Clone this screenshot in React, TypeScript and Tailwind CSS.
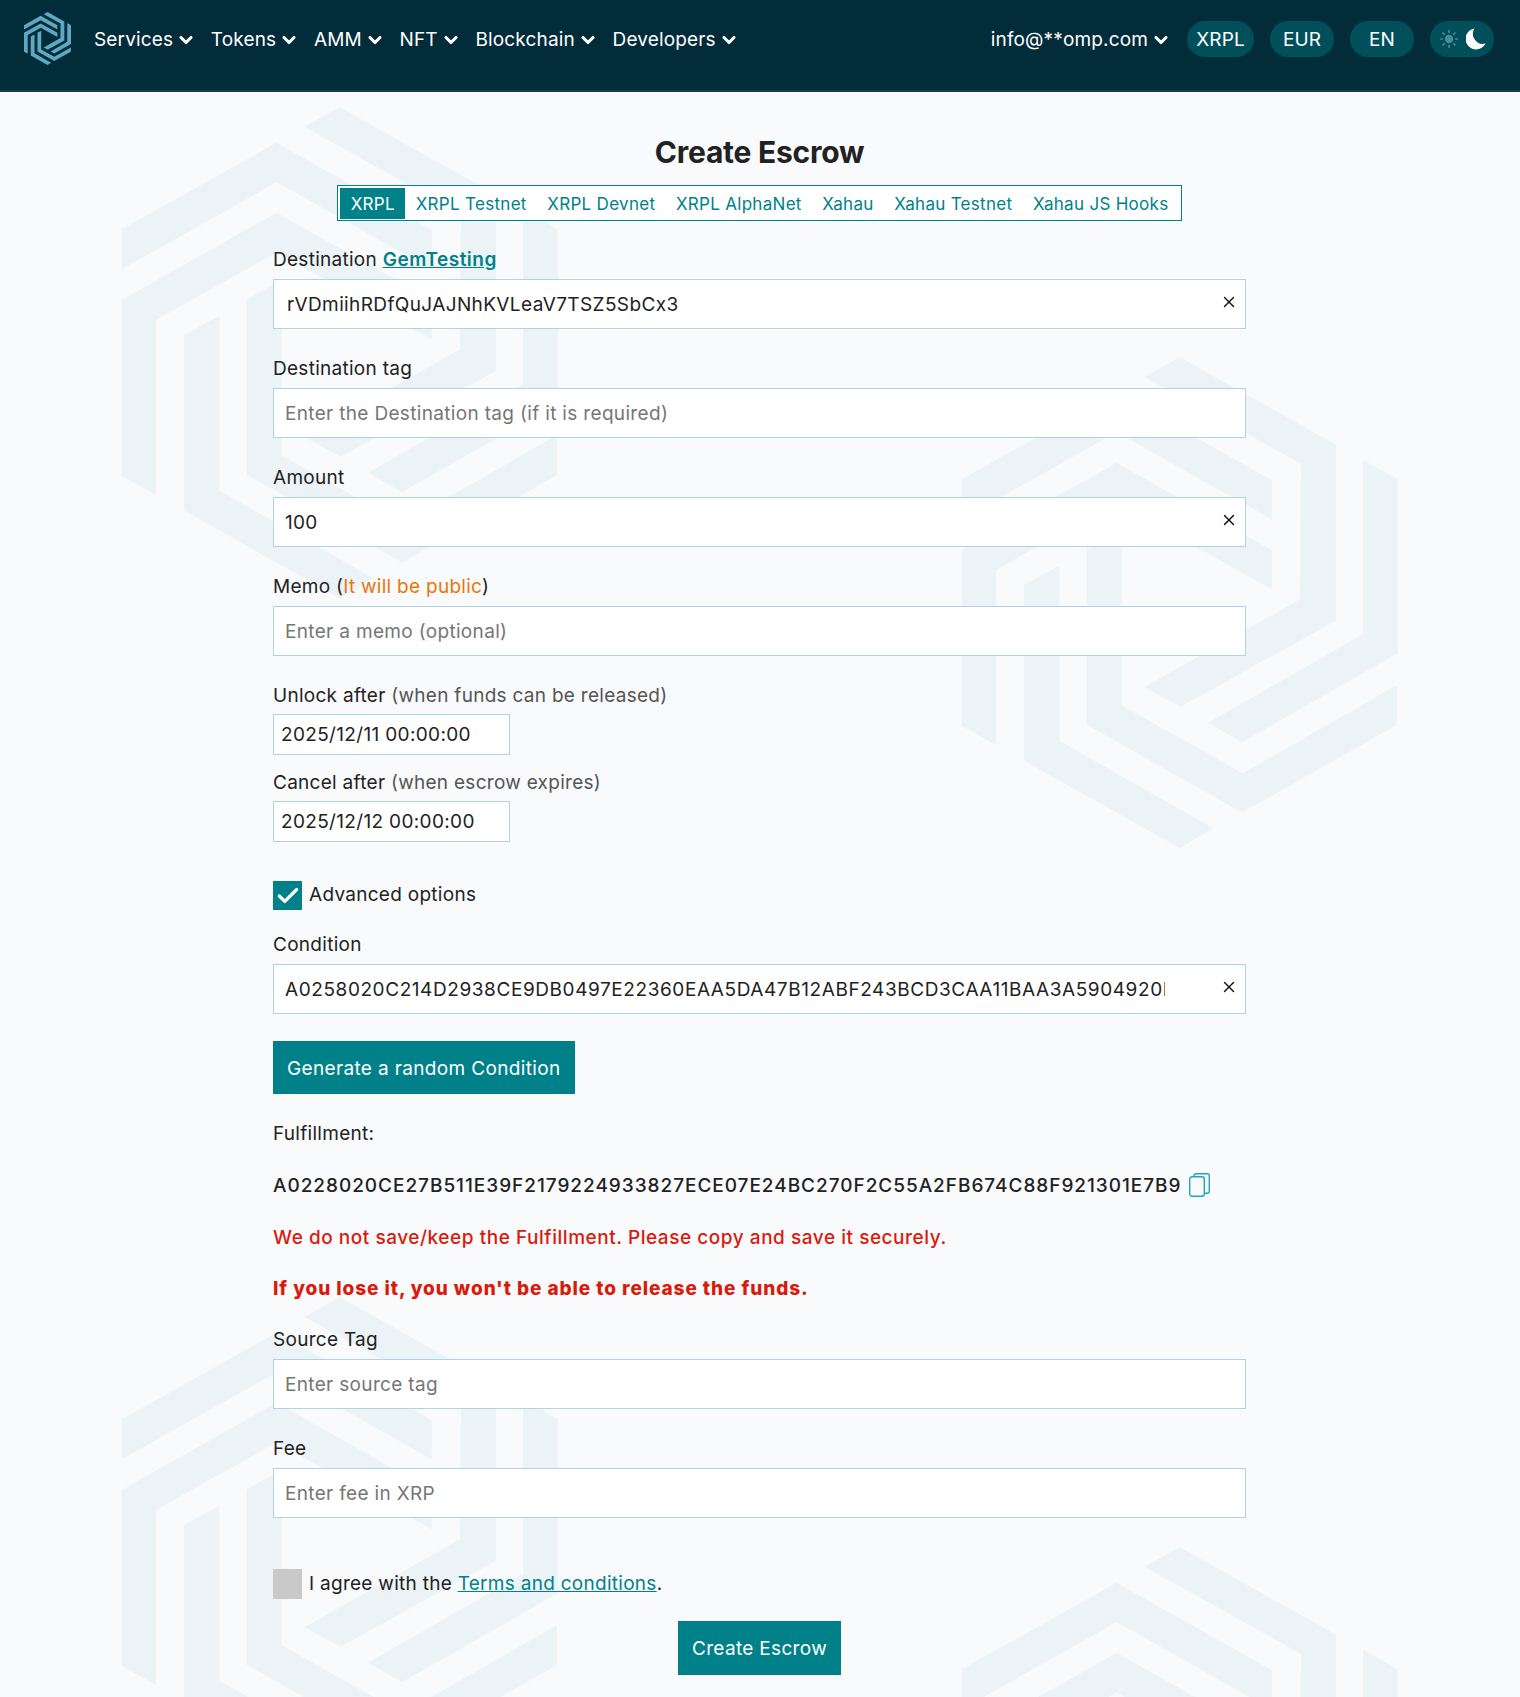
import React from "react";
import { ChevronDown, Check, Sun, X } from "lucide-react";

const navItems = ["Services", "Tokens", "AMM", "NFT", "Blockchain", "Developers"];
const networks = ["XRPL", "XRPL Testnet", "XRPL Devnet", "XRPL AlphaNet", "Xahau", "Xahau Testnet", "Xahau JS Hooks"];

// logo strands, traced from the background mark
const strands = [
  "613,110 720,52 1188,314 1188,842 722,1100 613,1042 1080,778 1083,372",
  "1270,360 1374,418 1374,940 906,1207 804,1148 1270,882",
  "440,628 545,570 545,1096 908,1300 1370,1036 1370,1156 906,1418 440,1154",
  "358,677 252,735 252,1262 720,1525 820,1465 358,1202",
  "65,418 530,158 995,420 995,538 530,277 65,538",
  "65,630 530,368 995,630 995,748 530,487 168,690 168,1215 65,1157",
];

const Mark = ({ x, y }: { x: number; y: number }) => (
  <g transform={`translate(${x} ${y}) scale(0.3333)`}>
    {strands.map((points) => (
      <polygon key={points} points={points} />
    ))}
  </g>
);

const Logo = () => (
  <svg viewBox="65 52 1309 1473" className="h-[53px] w-[47px] shrink-0 -translate-y-[1px] fill-[#5fa8c1]">
    {strands.map((points) => (
      <polygon key={points} points={points} />
    ))}
  </svg>
);

const CopyIcon = () => (
  <svg viewBox="0 0 21 24" fill="none" stroke="#1fa6bf" strokeWidth="1.4" className="ml-[8px] h-[24px] w-[21px] -translate-y-[1px]">
    <rect x="0.7" y="3.7" width="14.6" height="19.6" rx="2.5" />
    <path d="M5 3.5V2.7A2 2 0 0 1 7 .7h11.3a2 2 0 0 1 2 2v15.6a2 2 0 0 1-2 2h-3" />
  </svg>
);

const MoonIcon = () => (
  <svg viewBox="0 0 20 22" className="h-[22px] w-[20px] fill-white">
    <path d="M8.5 .5A10.5 10.5 0 1 0 19.5 15.5A10 10 0 0 1 8.5 .5Z" />
  </svg>
);

const TextInput = ({
  value,
  placeholder,
  clear,
  className = "pl-[11px] tracking-[0.33px]",
}: {
  value?: string;
  placeholder?: string;
  clear?: boolean;
  className?: string;
}) => (
  <div className="relative">
    <input
      readOnly
      value={value ?? ""}
      placeholder={placeholder}
      className={`block h-[50px] w-full border border-[#add5e0] bg-white text-[19px] text-[#222] outline-none placeholder:text-[#767676] ${className}`}
    />
    {clear && <X size={18} strokeWidth={1.9} className="absolute right-[8px] top-[14px] text-[#111]" />}
  </div>
);

const Label = ({ children, gap = "mb-[6px]" }: { children: React.ReactNode; gap?: string }) => (
  <div className={`${gap} h-[27px] text-[19px] leading-[27px] tracking-[0.28px] text-[#222]`}>{children}</div>
);

const DateInput = ({ value }: { value: string }) => (
  <input
    readOnly
    value={value}
    className="block h-[41px] w-[237px] border border-[#add5e0] bg-white pl-[7px] text-[19px] tracking-[0.34px] text-[#222] outline-none"
  />
);

export default function App() {
  return (
    <div className="relative min-h-[1697px] overflow-hidden bg-[#f9fafc] font-['Inter',sans-serif] text-[19px] tracking-[0.28px] text-[#222]">
      <svg className="absolute inset-0 h-full w-full fill-[#ecf3f6]">
        <Mark x={100} y={90} />
        <Mark x={940} y={340} />
        <Mark x={100} y={1280} />
        <Mark x={940} y={1530} />
      </svg>

      <header className="relative flex h-[92px] items-center justify-between border-b-2 border-[#123f4e] bg-[#022c3a] pb-[12px] pl-[24px] pr-[26px] text-white">
        <div className="flex items-center">
          <Logo />
          <nav className="ml-[23px] flex translate-y-[1px] gap-[14.7px] tracking-[0.15px]">
            {navItems.map((item) => (
              <div key={item} className="flex items-center gap-[3px]">
                {item}
                <ChevronDown size={20} strokeWidth={3.8} />
              </div>
            ))}
          </nav>
        </div>
        <div className="flex items-center gap-[16px] tracking-[0.15px]">
          <div className="flex translate-y-[1px] items-center gap-[3px]">
            info@**omp.com
            <ChevronDown size={20} strokeWidth={3.8} />
          </div>
          <div className="flex h-[36px] w-[67px] items-center justify-center rounded-full bg-[#024f5c] pt-[2px]">XRPL</div>
          <div className="flex h-[36px] w-[64px] items-center justify-center rounded-full bg-[#024f5c] pt-[2px]">EUR</div>
          <div className="flex h-[36px] w-[64px] items-center justify-center rounded-full bg-[#024f5c] pt-[2px]">EN</div>
          <div className="flex h-[36px] w-[64px] items-center justify-center gap-[7px] rounded-full bg-[#024f5c]">
            <Sun size={20} fill="currentColor" className="text-[#4d8a94]" />
            <MoonIcon />
          </div>
        </div>
      </header>

      <main className="relative ml-[273px] w-[973px]">
        <h1 className="mt-[41px] h-[38px] text-center text-[30px] font-bold leading-[38px] tracking-[-0.25px] text-[#222]">
          Create Escrow
        </h1>
        <div className="mt-[14px] flex justify-center">
          <div className="flex h-[36px] items-center border border-[#00818a] bg-white p-[2px] text-[17px] tracking-[0.3px] text-[#00818a]">
            <span className="flex h-[31px] items-center bg-[#00818a] px-[10.5px] pt-[4px] text-white">XRPL</span>
            {networks.slice(1).map((name) => (
              <span key={name} className="px-[10.3px] pt-[4px]">
                {name}
              </span>
            ))}
          </div>
        </div>

        <div className="mt-[25px]">
          <Label>
            Destination <a className="font-semibold tracking-[0.5px] text-[#00818a] underline">GemTesting</a>
          </Label>
          <TextInput value="rVDmiihRDfQuJAJNhKVLeaV7TSZ5SbCx3" clear className="pl-[13px] tracking-[0.38px]" />
        </div>
        <div className="mt-[26px]">
          <Label>Destination tag</Label>
          <TextInput placeholder="Enter the Destination tag (if it is required)" />
        </div>
        <div className="mt-[26px]">
          <Label>Amount</Label>
          <TextInput value="100" clear />
        </div>
        <div className="mt-[26px]">
          <Label>
            Memo (<span className="text-[#e8760c]">It will be public</span>)
          </Label>
          <TextInput placeholder="Enter a memo (optional)" />
        </div>

        <div className="mt-[26px]">
          <Label gap="mb-[5px]">
            Unlock after <span className="text-[#555]">(when funds can be released)</span>
          </Label>
          <DateInput value="2025/12/11 00:00:00" />
        </div>
        <div className="mt-[14px]">
          <Label gap="mb-[5px]">
            Cancel after <span className="text-[#555]">(when escrow expires)</span>
          </Label>
          <DateInput value="2025/12/12 00:00:00" />
        </div>

        <div className="mt-[39px] flex items-center">
          <div className="flex h-[29px] w-[29px] items-center justify-center bg-[#00818a]">
            <Check size={26} strokeWidth={3} className="text-white" />
          </div>
          <span className="ml-[7px]">Advanced options</span>
        </div>

        <div className="mt-[21px]">
          <Label>Condition</Label>
          <TextInput
            value="A0258020C214D2938CE9DB0497E22360EAA5DA47B12ABF243BCD3CAA11BAA3A5904920E810100"
            clear
            className="pl-[11px] pr-[80px] tracking-[0.58px]"
          />
        </div>

        <button className="mt-[27px] block h-[53px] bg-[#00818a] px-[14px] pt-[3px] text-[19px] tracking-[0.35px] text-white">
          Generate a random Condition
        </button>

        <p className="mt-[26px] leading-[27px]">Fulfillment:</p>
        <div className="mt-[25px] flex h-[27px] items-center font-medium tracking-[0.97px]">
          <span className="translate-y-[1px]">A0228020CE27B511E39F2179224933827ECE07E24BC270F2C55A2FB674C88F921301E7B9</span>
          <CopyIcon />
        </div>
        <p className="mt-[25px] font-medium leading-[27px] tracking-[0.54px] text-[#d81b0c]">
          We do not save/keep the Fulfillment. Please copy and save it securely.
        </p>
        <p className="mt-[24px] font-extrabold leading-[27px] tracking-[0.92px] text-[#d81b0c]">
          If you lose it, you won't be able to release the funds.
        </p>

        <div className="mt-[24px]">
          <Label>Source Tag</Label>
          <TextInput placeholder="Enter source tag" />
        </div>
        <div className="mt-[26px]">
          <Label>Fee</Label>
          <TextInput placeholder="Enter fee in XRP" />
        </div>

        <div className="mt-[51px] flex items-center">
          <div className="h-[30px] w-[29px] bg-[#c9c9c9]" />
          <span className="ml-[7px]">
            I agree with the <a className="text-[#00818a] underline">Terms and conditions</a>.
          </span>
        </div>

        <div className="mt-[22px] flex justify-center">
          <button className="h-[54px] w-[163px] bg-[#00818a] pt-[2px] text-[19px] tracking-[0.33px] text-white">Create Escrow</button>
        </div>
      </main>
    </div>
  );
}
